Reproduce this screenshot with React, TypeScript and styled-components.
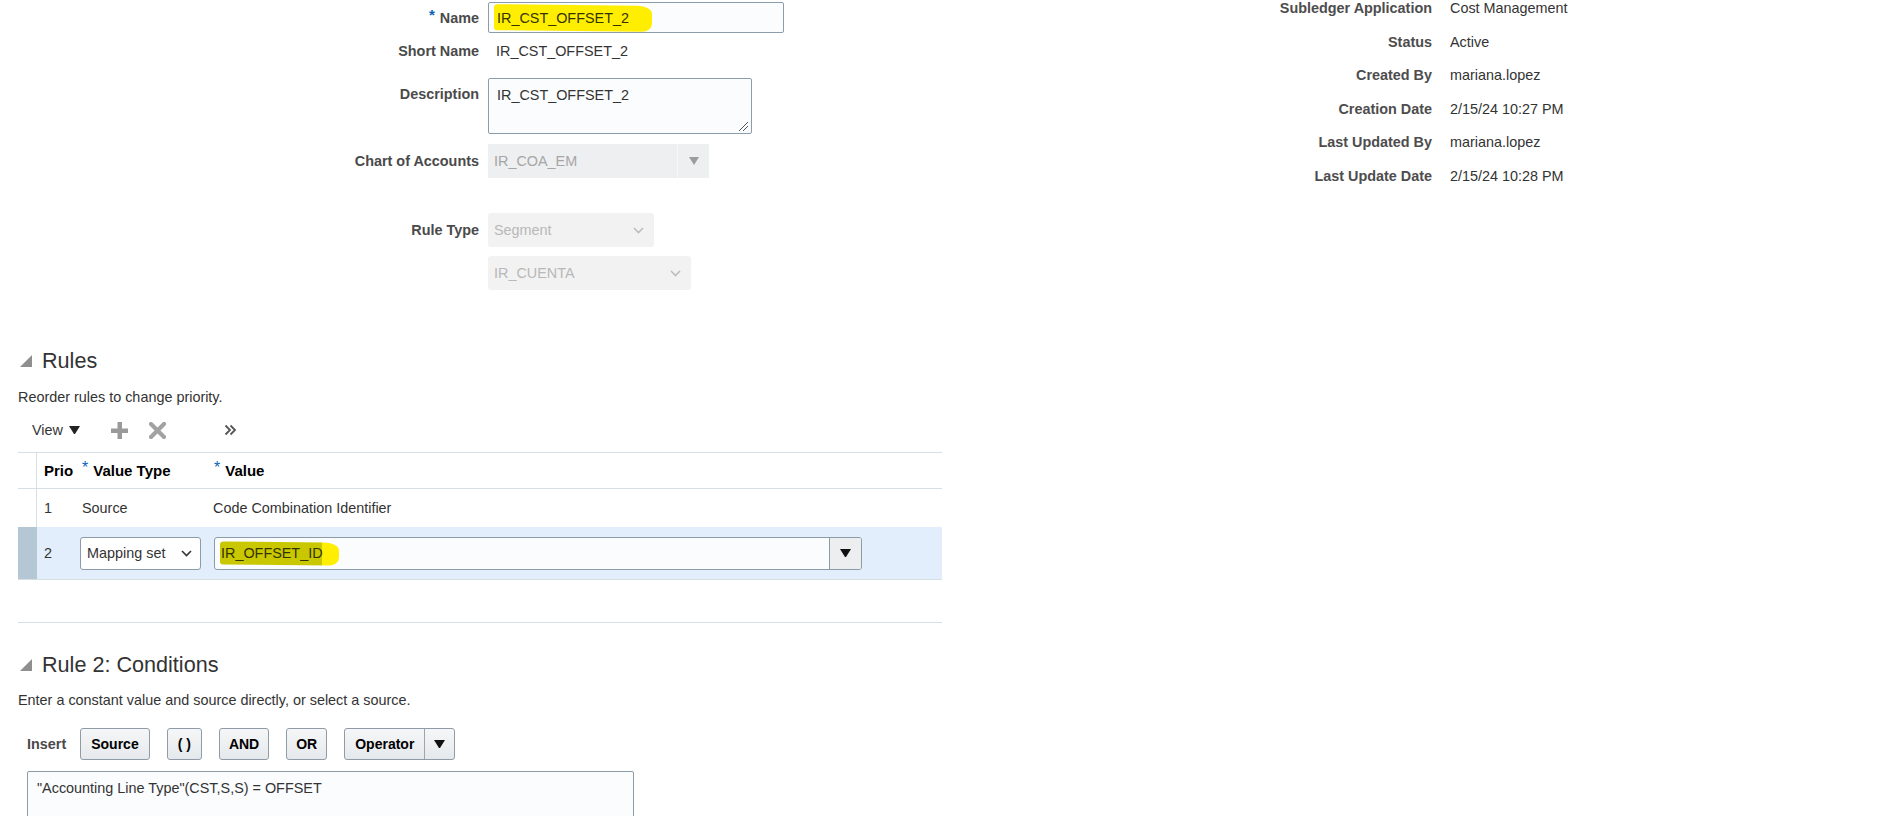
import {createGlobalStyle, styled} from "styled-components";

const GlobalStyle = createGlobalStyle`
    html, body {
        margin: 0;
        padding: 0;
        background: #ffffff;
    }
    body {
        font-family: "Liberation Sans", Arial, sans-serif;
        font-size: 14.4px;
        color: #333333;
        overflow: hidden;
    }
`;

const Page = styled.div`
    width: 1897px;
    height: 816px;
    overflow: hidden;
`;

/* ---------- top header form ---------- */

const Top = styled.div`
    display: flex;
    align-items: flex-start;
`;

const Form = styled.div`
    display: flex;
    flex-direction: column;
    width: 784px;
`;

const FormRow = styled.div<{ $mt: number; $top?: boolean }>`
    display: grid;
    grid-template-columns: 479px auto;
    column-gap: 9px;
    align-items: ${({$top}) => ($top ? 'start' : 'center')};
    margin-top: ${({$mt}) => $mt}px;
`;

const Label = styled.label<{ $pt?: number }>`
    text-align: right;
    font-weight: 700;
    color: #4a4a4a;
    line-height: 18px;
    padding-top: ${({$pt}) => $pt ?? 0}px;
    white-space: nowrap;
`;

const Req = styled.span`
    color: #0b63b8;
    font-size: 15px;
    position: relative;
    top: -3px;
    margin-right: 5px;
`;

const TextInput = styled.div`
    box-sizing: border-box;
    width: 296px;
    height: 31px;
    display: flex;
    align-items: center;
    padding: 0 8px;
    background: #fbfcfd;
    border: 1px solid #8c9cab;
    border-radius: 2px;
    color: #333;
`;

const Highlight = styled.span<{ $olive?: boolean }>`
    position: relative;
    isolation: isolate;
    line-height: 18px;
    color: #333300;

    &::before {
        content: "";
        position: absolute;
        z-index: -1;
        top: ${({$olive}) => ($olive ? '-2px' : '-4px')};
        bottom: ${({$olive}) => ($olive ? '-3px' : '-4px')};
        left: ${({$olive}) => ($olive ? '-1px' : '-3px')};
        right: ${({$olive}) => ($olive ? '-16px' : '-23px')};
        background: ${({$olive}) => ($olive
            ? 'linear-gradient(90deg, #c9c800 0, #c9c800 calc(100% - 17px), #ffee00 calc(100% - 17px))'
            : '#ffee00')};
        border-radius: 4px 14px 10px 3px / 3px 8px 8px 3px;
        transform: skewY(0.6deg);
    }
`;

const ReadValue = styled.span`
    line-height: 18px;
    padding-left: 8px;
    color: #333;
`;

const TextArea = styled.div`
    position: relative;
    box-sizing: border-box;
    width: 264px;
    height: 56px;
    padding: 7px 8px;
    line-height: 18px;
    background: #fbfcfd;
    border: 1px solid #8c9cab;
    border-radius: 2px;
`;

const Grip = styled.svg`
    position: absolute;
    right: 2px;
    bottom: 1px;
`;

const DisabledCombo = styled.div`
    box-sizing: border-box;
    width: 221px;
    height: 34px;
    display: flex;
    background: #eeeff1;
`;

const ComboText = styled.div<{ $color?: string }>`
    flex: 1;
    display: flex;
    align-items: center;
    padding-left: 6px;
    color: ${({$color}) => $color ?? '#333'};
    white-space: nowrap;
`;

const ComboButton = styled.div<{ $bg?: string; $line?: string }>`
    box-sizing: border-box;
    width: 32px;
    display: flex;
    align-items: center;
    justify-content: center;
    background: ${({$bg}) => $bg ?? '#eeeff1'};
    border-left: 1px solid ${({$line}) => $line ?? '#f7f7f8'};
`;

const SoftSelect = styled.div<{ $w: number }>`
    box-sizing: border-box;
    width: ${({$w}) => $w}px;
    height: 34px;
    display: flex;
    align-items: center;
    justify-content: space-between;
    padding: 0 10px 0 6px;
    background: #f2f2f2;
    border-radius: 3px;
    color: #b8b8b8;
`;

/* ---------- info panel ---------- */

const Info = styled.div`
    display: grid;
    grid-template-columns: 188px auto;
    column-gap: 18px;
    row-gap: 15.6px;
    margin-left: 460px;
    margin-top: -1px;
    line-height: 18px;
`;

const InfoLabel = styled.div`
    text-align: right;
    font-weight: 700;
    color: #4d4d4d;
    white-space: nowrap;
`;

const InfoValue = styled.div`
    color: #333;
    white-space: nowrap;
`;

/* ---------- sections ---------- */

const Section = styled.section<{ $mt: number }>`
    padding-left: 18px;
    margin-top: ${({$mt}) => $mt}px;
`;

const Heading = styled.h2`
    display: flex;
    align-items: center;
    gap: 10px;
    margin: 0 0 0 2px;
    font-size: 21.6px;
    font-weight: 400;
    line-height: 26px;
    color: #333;
`;

const Hint = styled.p<{ $mt: number }>`
    margin: ${({$mt}) => $mt}px 0 0;
    line-height: 18px;
    color: #333;
`;

const Toolbar = styled.div`
    display: flex;
    align-items: center;
    height: 30px;
    margin-top: 9px;
`;

const ViewMenu = styled.div`
    display: flex;
    align-items: center;
    gap: 6px;
    margin-left: 14px;
    color: #333;
`;

const ToolIcon = styled.svg<{ $ml: number }>`
    margin-left: ${({$ml}) => $ml}px;
    flex: none;
`;

const Table = styled.div`
    width: 924px;
    margin-top: 7px;
`;

const Row = styled.div<{ $h: number; $head?: boolean; $selected?: boolean; $bottom?: boolean }>`
    box-sizing: border-box;
    display: grid;
    grid-template-columns: 19px 36px 134px 1fr;
    height: ${({$h}) => $h}px;
    background: ${({$selected}) => ($selected ? '#e2eefb' : 'transparent')};
    border-top: ${({$head}) => ($head ? '1px solid #d6dfe6' : 'none')};
    border-bottom: ${({$head, $bottom}) => ($head || $bottom ? '1px solid #d6dfe6' : 'none')};
    font-weight: ${({$head}) => ($head ? 700 : 400)};
    font-size: ${({$head}) => ($head ? '15px' : '14.4px')};
    color: ${({$head}) => ($head ? '#000' : '#333')};
`;

const Selector = styled.div<{ $active?: boolean }>`
    box-sizing: border-box;
    background: ${({$active}) => ($active ? '#b5c7d5' : 'transparent')};
    border-right: ${({$active}) => ($active ? 'none' : '1px solid #d6dfe6')};
`;

const Cell = styled.div<{ $pl?: number }>`
    display: flex;
    align-items: center;
    padding-left: ${({$pl}) => $pl ?? 7}px;
    white-space: nowrap;
`;

const HeadReq = styled.span`
    color: #0b63b8;
    font-weight: 400;
    font-size: 16px;
    position: relative;
    top: -3px;
    margin-right: 5px;
`;

const MapSelect = styled.div`
    box-sizing: border-box;
    width: 121px;
    height: 33px;
    display: flex;
    align-items: center;
    justify-content: space-between;
    padding: 0 8px 0 6px;
    background: #ffffff;
    border: 1px solid #8d9ba7;
    border-radius: 3px;
    color: #333;
`;

const ValueCombo = styled.div`
    box-sizing: border-box;
    width: 648px;
    height: 33px;
    display: flex;
    background: #fbfcfe;
    border: 1px solid #8d9ba7;
    border-radius: 3px;
    overflow: hidden;
`;

const Divider = styled.hr`
    width: 924px;
    height: 1px;
    border: none;
    background: #d6dfe6;
    margin: 42px 0 0 18px;
`;

const InsertRow = styled.div`
    display: flex;
    align-items: center;
    margin: 19px 0 0 9px;
`;

const InsertLabel = styled.span`
    font-weight: 700;
    color: #4a4a4a;
    margin-right: 14px;
`;

const Btn = styled.button`
    box-sizing: border-box;
    height: 32px;
    display: flex;
    align-items: stretch;
    padding: 0;
    margin-right: 17px;
    font-family: inherit;
    font-size: 14px;
    font-weight: 700;
    color: #000;
    background: linear-gradient(#f5f6f7, #e6e9ec);
    border: 1px solid #8f9ca8;
    border-radius: 3px;
`;

const BtnPart = styled.span<{ $arrow?: boolean; $px?: number }>`
    display: flex;
    align-items: center;
    padding: 0 ${({$px}) => $px ?? 9}px;
    border-left: ${({$arrow}) => ($arrow ? '1px solid #9aa6b0' : 'none')};
`;

const ConditionBox = styled.div`
    box-sizing: border-box;
    width: 607px;
    height: 70px;
    margin: 11px 0 0 9px;
    padding: 7px 9px;
    line-height: 18px;
    background: #fbfcfe;
    border: 1px solid #8d9ba7;
    border-radius: 2px;
    color: #333;
`;

/* ---------- icons ---------- */

function Collapse() {
    return (
        <svg width="12" height="12" viewBox="0 0 12 12">
            <polygon points="12,0 12,12 0,12" fill="#8f8f8f"/>
        </svg>
    );
}

function Chevron({color}: { color: string }) {
    return (
        <svg width="11" height="7" viewBox="0 0 11 7">
            <polyline points="1,1 5.5,5.5 10,1" fill="none" stroke={color} strokeWidth="1.6"/>
        </svg>
    );
}

function DownArrow({color, w = 10}: { color: string; w?: number }) {
    return (
        <svg width={w} height={w * 0.8} viewBox="0 0 10 8">
            <polygon points="0,0 10,0 5,8" fill={color}/>
        </svg>
    );
}

const info: [string, string][] = [
    ['Subledger Application', 'Cost Management'],
    ['Status', 'Active'],
    ['Created By', 'mariana.lopez'],
    ['Creation Date', '2/15/24 10:27 PM'],
    ['Last Updated By', 'mariana.lopez'],
    ['Last Update Date', '2/15/24 10:28 PM'],
];

export default function App() {
    return (
        <Page>
            <GlobalStyle/>
            <Top>
                <Form>
                    <FormRow $mt={2}>
                        <Label><Req>*</Req>Name</Label>
                        <TextInput><Highlight>IR_CST_OFFSET_2</Highlight></TextInput>
                    </FormRow>
                    <FormRow $mt={9}>
                        <Label>Short Name</Label>
                        <ReadValue>IR_CST_OFFSET_2</ReadValue>
                    </FormRow>
                    <FormRow $mt={18} $top>
                        <Label $pt={7}>Description</Label>
                        <TextArea>
                            IR_CST_OFFSET_2
                            <Grip width="12" height="12" viewBox="0 0 12 12">
                                <line x1="11" y1="2" x2="2" y2="11" stroke="#555" strokeWidth="1"/>
                                <line x1="11" y1="6" x2="6" y2="11" stroke="#555" strokeWidth="1"/>
                            </Grip>
                        </TextArea>
                    </FormRow>
                    <FormRow $mt={10}>
                        <Label>Chart of Accounts</Label>
                        <DisabledCombo>
                            <ComboText $color="#a6a6a6">IR_COA_EM</ComboText>
                            <ComboButton><DownArrow color="#9c9c9c" w={10}/></ComboButton>
                        </DisabledCombo>
                    </FormRow>
                    <FormRow $mt={35}>
                        <Label>Rule Type</Label>
                        <SoftSelect $w={166}>Segment<Chevron color="#bdbdbd"/></SoftSelect>
                    </FormRow>
                    <FormRow $mt={9}>
                        <span/>
                        <SoftSelect $w={203}>IR_CUENTA<Chevron color="#bdbdbd"/></SoftSelect>
                    </FormRow>
                </Form>
                <Info>
                    {info.map(([k, v]) => (
                        <>
                            <InfoLabel key={k}>{k}</InfoLabel>
                            <InfoValue key={k + 'v'}>{v}</InfoValue>
                        </>
                    ))}
                </Info>
            </Top>

            <Section $mt={58}>
                <Heading><Collapse/>Rules</Heading>
                <Hint $mt={14}>Reorder rules to change priority.</Hint>
                <Toolbar>
                    <ViewMenu>
                        View
                        <DownArrow color="#222" w={11}/>
                    </ViewMenu>
                    <ToolIcon $ml={31} width="17" height="17" viewBox="0 0 17 17">
                        <rect x="6.5" y="0" width="4.5" height="17" fill="#9a9a9a"/>
                        <rect x="0" y="6.5" width="17" height="4.5" fill="#9a9a9a"/>
                    </ToolIcon>
                    <ToolIcon $ml={21} width="17" height="17" viewBox="0 0 17 17">
                        <path d="M2 2 L15 15 M15 2 L2 15" stroke="#a2a2a2" strokeWidth="4.2" strokeLinecap="round"/>
                    </ToolIcon>
                    <ToolIcon $ml={58} width="13" height="12" viewBox="0 0 13 12">
                        <polyline points="1.5,1.5 6,6 1.5,10.5" fill="none" stroke="#555" strokeWidth="1.8"/>
                        <polyline points="6.5,1.5 11,6 6.5,10.5" fill="none" stroke="#555" strokeWidth="1.8"/>
                    </ToolIcon>
                </Toolbar>
                <Table>
                    <Row $h={37} $head>
                        <Selector/>
                        <Cell>Prio</Cell>
                        <Cell $pl={9}><HeadReq>*</HeadReq>Value Type</Cell>
                        <Cell><HeadReq>*</HeadReq>Value</Cell>
                    </Row>
                    <Row $h={38}>
                        <Selector/>
                        <Cell>1</Cell>
                        <Cell $pl={9}>Source</Cell>
                        <Cell $pl={6}>Code Combination Identifier</Cell>
                    </Row>
                    <Row $h={53} $selected $bottom>
                        <Selector $active/>
                        <Cell>2</Cell>
                        <Cell>
                            <MapSelect>Mapping set<Chevron color="#333"/></MapSelect>
                        </Cell>
                        <Cell>
                            <ValueCombo>
                                <ComboText><Highlight $olive>IR_OFFSET_ID</Highlight></ComboText>
                                <ComboButton $bg="#eceef0" $line="#8d9ba7"><DownArrow color="#111" w={11}/></ComboButton>
                            </ValueCombo>
                        </Cell>
                    </Row>
                </Table>
            </Section>

            <Divider/>

            <Section $mt={29}>
                <Heading><Collapse/>Rule 2: Conditions</Heading>
                <Hint $mt={13}>Enter a constant value and source directly, or select a source.</Hint>
                <InsertRow>
                    <InsertLabel>Insert</InsertLabel>
                    <Btn><BtnPart $px={10}>Source</BtnPart></Btn>
                    <Btn><BtnPart $px={10}>( )</BtnPart></Btn>
                    <Btn><BtnPart>AND</BtnPart></Btn>
                    <Btn><BtnPart>OR</BtnPart></Btn>
                    <Btn>
                        <BtnPart $px={10}>Operator</BtnPart>
                        <BtnPart $arrow><DownArrow color="#111" w={11}/></BtnPart>
                    </Btn>
                </InsertRow>
                <ConditionBox>"Accounting Line Type"(CST,S,S) = OFFSET</ConditionBox>
            </Section>
        </Page>
    );
}
